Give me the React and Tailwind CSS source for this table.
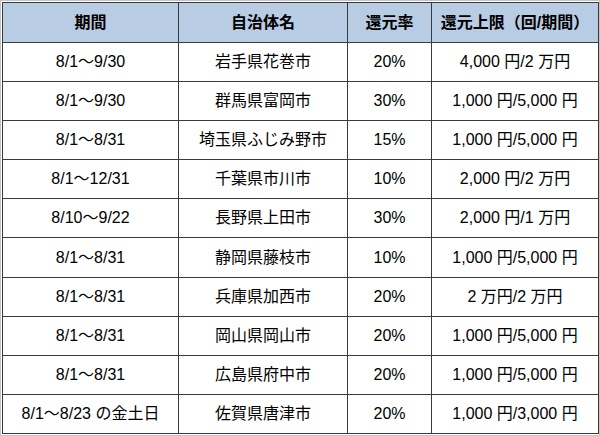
const rows = [
  ["8/1～9/30", "岩手県花巻市", "20%", "4,000 円/2 万円"],
  ["8/1～9/30", "群馬県富岡市", "30%", "1,000 円/5,000 円"],
  ["8/1～8/31", "埼玉県ふじみ野市", "15%", "1,000 円/5,000 円"],
  ["8/1～12/31", "千葉県市川市", "10%", "2,000 円/2 万円"],
  ["8/10～9/22", "長野県上田市", "30%", "2,000 円/1 万円"],
  ["8/1～8/31", "静岡県藤枝市", "10%", "1,000 円/5,000 円"],
  ["8/1～8/31", "兵庫県加西市", "20%", "2 万円/2 万円"],
  ["8/1～8/31", "岡山県岡山市", "20%", "1,000 円/5,000 円"],
  ["8/1～8/31", "広島県府中市", "20%", "1,000 円/5,000 円"],
  ["8/1～8/23 の金土日", "佐賀県唐津市", "20%", "1,000 円/3,000 円"],
];

export default function App() {
  return (
    <div
      className="w-[600px] h-[436px] bg-white border border-[#c4c4c4] p-px"
      style={{ fontFamily: '"Liberation Sans", "Noto Sans CJK JP", sans-serif' }}
    >
      <table className="w-[596px] h-[432px] border-collapse table-fixed text-[16px] text-black">
        <colgroup>
          <col className="w-[176px]" />
          <col className="w-[169px]" />
          <col className="w-[84px]" />
          <col className="w-[167px]" />
        </colgroup>
        <thead>
          <tr className="h-[40px] bg-[#b8cce4]">
            <th className="border border-[#3a3a3a] font-bold text-center">期間</th>
            <th className="border border-[#3a3a3a] font-bold text-center">自治体名</th>
            <th className="border border-[#3a3a3a] font-bold text-center">還元率</th>
            <th className="border border-[#3a3a3a] font-bold text-center">還元上限（回/期間）</th>
          </tr>
        </thead>
        <tbody>
          {rows.map((r, i) => (
            <tr key={i} className="h-[39px]">
              {r.map((c, j) => (
                <td key={j} className="border border-[#3a3a3a] text-center leading-none">
                  {c}
                </td>
              ))}
            </tr>
          ))}
        </tbody>
      </table>
    </div>
  );
}
